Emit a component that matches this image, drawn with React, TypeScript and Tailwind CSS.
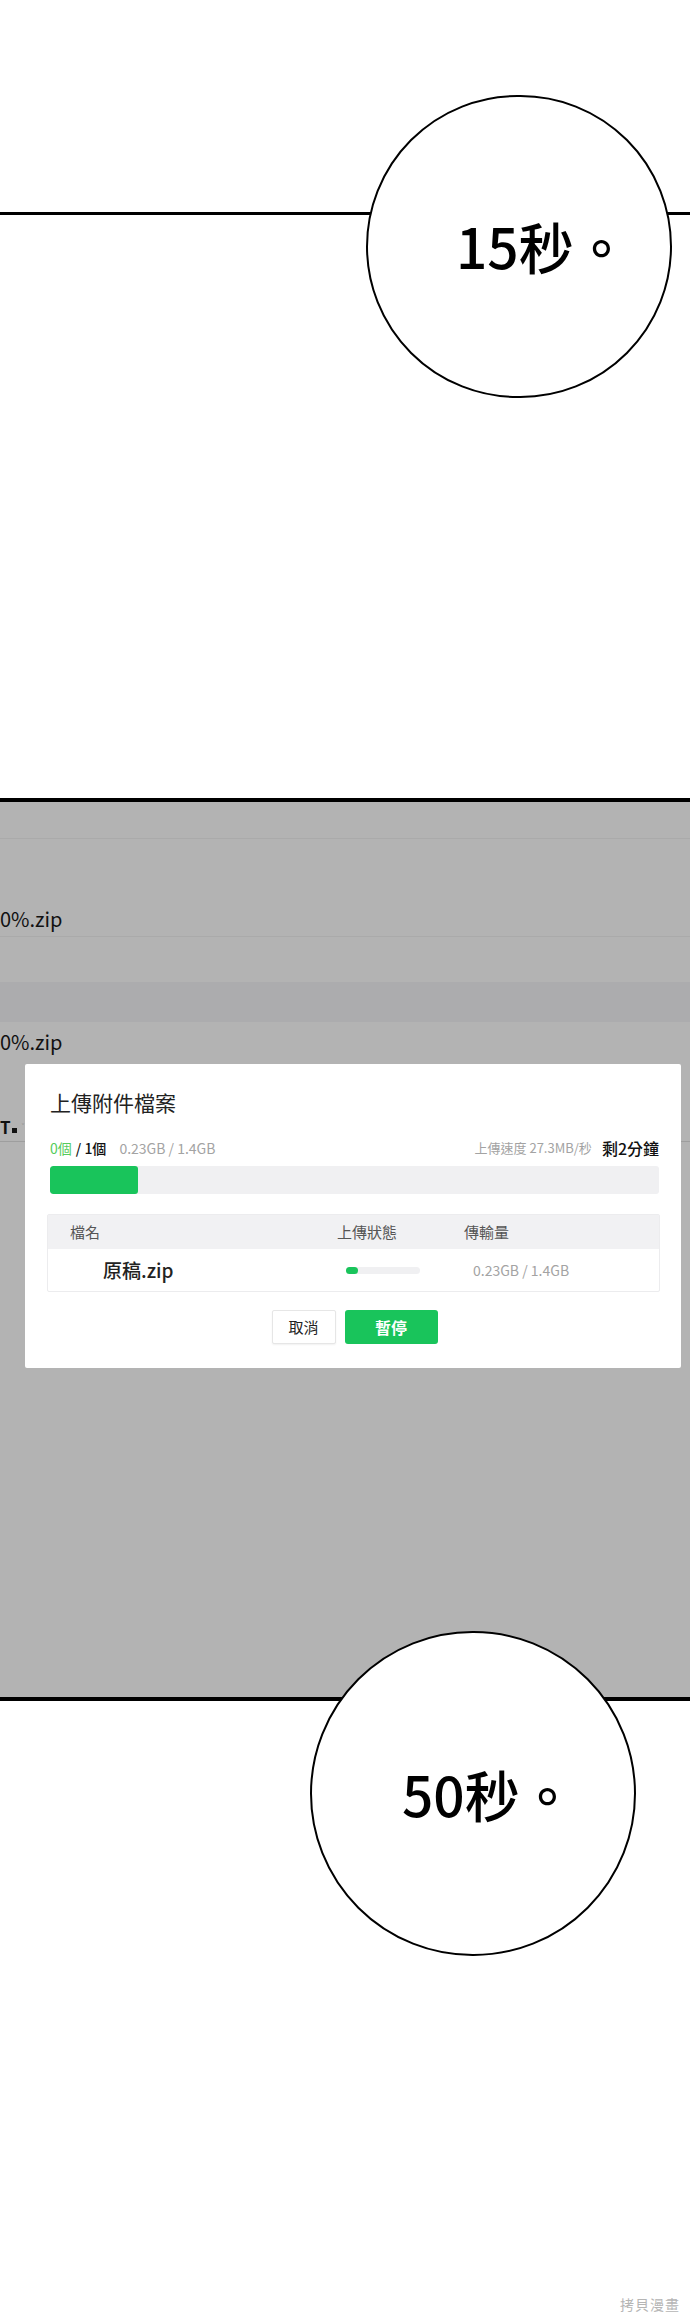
import React from 'react';

const font = { fontFamily: '"Noto Sans CJK TC", "Noto Sans", sans-serif' };

function Bubble({ className, text, textClass }: { className: string; text: string; textClass: string }) {
  return (
    <div className={`absolute rounded-full border-[2px] border-black bg-white ${className}`}>
      <span className={`absolute whitespace-nowrap text-[55px] leading-none font-medium text-black ${textClass}`}>
        {text}
      </span>
    </div>
  );
}

function UploadDialog() {
  return (
    <div className="absolute left-[25px] top-[1064px] w-[656px] h-[304px] bg-white rounded-[2px] pl-[25px] pr-[22px] pt-[23px]">
      <h2 className="text-[21px] leading-[30px] text-[#222]">上傳附件檔案</h2>

      {/* counts */}
      <div className="mt-[21px] flex items-center h-[20px] text-[14px]">
        <span className="text-[#55cc5c]">0個</span>
        <span className="ml-[4px] text-[#111] font-medium">/ 1個</span>
        <span className="ml-[13px] text-[#a3a3a3]">0.23GB / 1.4GB</span>
        <span className="ml-auto text-[13px] text-[#a3a3a3]">上傳速度 27.3MB/秒</span>
        <span className="ml-[10px] text-[16px] text-[#111] font-medium">剩2分鐘</span>
      </div>

      {/* main progress */}
      <div className="mt-[8px] h-[28px] w-full rounded-[3px] bg-[#f0f0f2] overflow-hidden">
        <div className="h-full w-[88px] rounded-[3px] bg-[#19c45b]" />
      </div>

      {/* file table */}
      <div className="mt-[20px] ml-[-3px] mr-[-1px] border border-[#ececee] rounded-[2px]">
        <div className="grid grid-cols-[289px_127px_1fr] h-[34px] items-center bg-[#f1f1f3] text-[15px] text-[#555]">
          <span className="pl-[22px]">檔名</span>
          <span>上傳狀態</span>
          <span>傳輸量</span>
        </div>
        <div className="grid grid-cols-[289px_127px_1fr] h-[42px] items-center">
          <span className="pl-[55px] text-[19px] text-[#222] font-medium">原稿.zip</span>
          <div className="ml-[9px] h-[7px] w-[74px] rounded-full bg-[#f0f0f2]">
            <div className="h-full w-[12px] rounded-full bg-[#19c45b]" />
          </div>
          <span className="pl-[9px] text-[14px] text-[#a3a3a3]">0.23GB / 1.4GB</span>
        </div>
      </div>

      {/* buttons */}
      <div className="mt-[18px] flex justify-center gap-[9px]">
        <button className="w-[64px] h-[34px] border border-[#e6e6e6] rounded-[2px] bg-white text-[15px] text-[#222] shadow-[0_1px_2px_rgba(0,0,0,0.06)]">
          取消
        </button>
        <button className="w-[93px] h-[34px] rounded-[3px] bg-[#19c45b] text-[16px] font-bold text-white">
          暫停
        </button>
      </div>
    </div>
  );
}

export default function App() {
  return (
    <div className="relative w-[690px] h-[2319px] bg-white overflow-hidden" style={font}>
      {/* first panel */}
      <div className="h-[798px] pt-[212px]">
        <div className="h-[3px] bg-black" />
      </div>

      {/* grey screen panel */}
      <div className="border-y-[4px] border-black bg-[#b3b3b3] h-[903px]">
        <div className="h-[37px] border-b border-[#aaaaaa]" />
        <div className="h-[98px] border-b border-[#aaaaaa] flex items-end pb-[3px]">
          <span className="text-[20px] leading-[28px] text-[#111]">0%.zip</span>
        </div>
        <div className="h-[45px]" />
        <div className="h-[40px] bg-[#acacae]" />
        <div className="h-[39px] flex items-center">
          <span className="text-[20px] leading-[28px] text-[#111]">0%.zip</span>
        </div>
        <div className="h-[81px] border-b border-[#9e9e9e] flex items-end pb-[6px]">
          <span className="text-[17px] leading-none font-bold text-[#111]">T</span>
          <span className="ml-[1px] mb-[2px] w-[5px] h-[5px] bg-[#111]" />
          <span className="ml-[5px] mb-[4px] text-[9px] leading-none text-[#888]">˅</span>
        </div>
      </div>

      <UploadDialog />

      <Bubble className="left-[366px] top-[95px] w-[306px] h-[303px]" text="15秒。" textClass="left-[88px] top-[121px]" />
      <Bubble className="left-[310px] top-[1631px] w-[326px] h-[325px]" text="50秒。" textClass="left-[90px] top-[133px]" />

      <span className="absolute right-[10px] bottom-[8px] text-[14px] leading-none tracking-[1px] text-[#b5b5b5]">
        拷貝漫畫
      </span>
    </div>
  );
}
